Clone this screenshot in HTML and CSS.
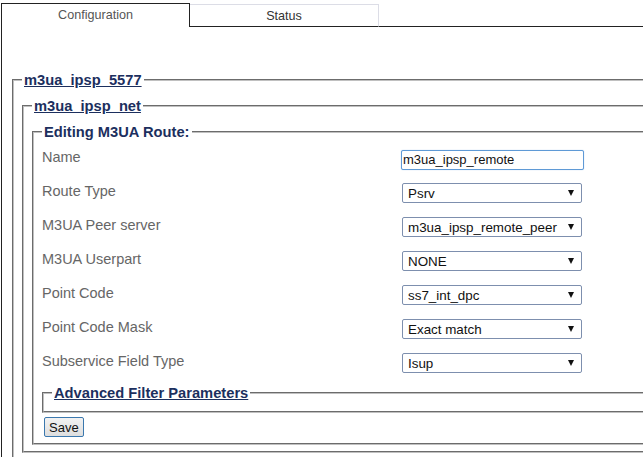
FILE: index.html
```html
<!DOCTYPE html>
<html>
<head>
<meta charset="utf-8">
<title>Editing M3UA Route</title>
<link rel="stylesheet" href="styles.css">
</head>
<body>
<div class="tabs">
  <div class="tab tab-active">Configuration</div>
  <div class="tab tab-inactive">Status</div>
  <div class="tab-fill"></div>
</div>
<div class="panel">
  <fieldset class="fs fs-outer">
    <legend><a href="#">m3ua_ipsp_5577</a></legend>
    <fieldset class="fs fs-mid">
      <legend><a href="#">m3ua_ipsp_net</a></legend>
      <fieldset class="fs fs-edit">
        <legend>Editing M3UA Route:</legend>
        <div class="rows">
          <div class="row">
            <label class="lbl">Name</label>
            <input class="txt" type="text" value="m3ua_ipsp_remote">
          </div>
          <div class="row">
            <label class="lbl">Route Type</label>
            <span class="sel"><select><option>Psrv</option></select></span>
          </div>
          <div class="row">
            <label class="lbl">M3UA Peer server</label>
            <span class="sel"><select><option>m3ua_ipsp_remote_peer</option></select></span>
          </div>
          <div class="row">
            <label class="lbl">M3UA Userpart</label>
            <span class="sel"><select><option>NONE</option></select></span>
          </div>
          <div class="row">
            <label class="lbl">Point Code</label>
            <span class="sel"><select><option>ss7_int_dpc</option></select></span>
          </div>
          <div class="row">
            <label class="lbl">Point Code Mask</label>
            <span class="sel"><select><option>Exact match</option></select></span>
          </div>
          <div class="row">
            <label class="lbl">Subservice Field Type</label>
            <span class="sel"><select><option>Isup</option></select></span>
          </div>
        </div>
        <fieldset class="fs fs-adv">
          <legend><a href="#">Advanced Filter Parameters</a></legend>
        </fieldset>
        <button class="btn" type="button">Save</button>
      </fieldset>
    </fieldset>
  </fieldset>
</div>
</body>
</html>
```

FILE: styles.css
```css
html, body {
  margin: 0;
  padding: 0;
  background: #ffffff;
}
body {
  width: 643px;
  height: 457px;
  overflow: hidden;
  font-family: "Liberation Sans", Arial, sans-serif;
}

.tabs {
  display: flex;
  padding-top: 3px;
  padding-left: 1px;
  height: 24px;
  width: 900px;
}
.tab {
  box-sizing: border-box;
  width: 189px;
  font-size: 12.6px;
  display: flex;
  align-items: center;
  justify-content: center;
}
.tab-active {
  height: 24px;
  border: 1px solid #222;
  border-bottom: 0;
  color: #555;
  padding-bottom: 1px;
}
.tab-inactive {
  margin-top: 1px;
  height: 23px;
  border-top: 1px solid #dcdde6;
  border-right: 1px solid #dcdde6;
  border-bottom: 1px solid #222;
  color: #333;
}
.tab-fill {
  flex: 1;
  height: 24px;
  box-sizing: border-box;
  border-bottom: 1px solid #222;
}

.panel {
  margin-left: 1px;
  border-left: 1px solid #222;
  width: 900px;
  min-height: 600px;
  padding-top: 45px;
  box-sizing: border-box;
}

.fs {
  margin: 0;
  border: 2px groove #c0c0c0;
  padding: 10px 0 6px 8px;
  min-width: 0;
}
.fs > legend {
  padding: 0 2px;
  font-size: 14.7px;
  line-height: 16px;
  font-weight: bold;
  color: #1c2f5e;
}
.fs > legend a {
  color: #1c2f5e;
  text-decoration: underline;
}
.fs-outer {
  margin-left: 10px;
}
.fs-edit {
  padding-top: 2px;
}

.rows {
  display: flex;
  flex-direction: column;
}
.row {
  display: flex;
  align-items: center;
  height: 34px;
}
.lbl {
  width: 359px;
  flex: none;
  font-size: 14.5px;
  color: #666;
  padding-bottom: 4px;
}
.txt {
  box-sizing: border-box;
  width: 183px;
  height: 20px;
  margin: 1px 0 0 0;
  padding: 0 1px;
  border: 1px solid #5f9ad6;
  border-radius: 2px;
  box-shadow: 0 0 1px #8fb8e6;
  font-family: "Liberation Sans", Arial, sans-serif;
  font-size: 13px;
  color: #111;
  outline: none;
}
.sel {
  position: relative;
  display: inline-block;
  margin-left: 1px;
}
.sel select {
  -webkit-appearance: none;
  appearance: none;
  box-sizing: border-box;
  width: 180px;
  height: 20px;
  margin: 0;
  padding: 0 0 0 5px;
  border: 1px solid #7d8fae;
  border-radius: 2px;
  background: #fff;
  font-family: "Liberation Sans", Arial, sans-serif;
  font-size: 13.4px;
  color: #111;
  display: block;
}
.sel::after {
  content: "";
  position: absolute;
  right: 8px;
  top: 7px;
  border-left: 3px solid transparent;
  border-right: 3px solid transparent;
  border-top: 6px solid #111;
  pointer-events: none;
}

.fs-adv {
  margin-top: 5px;
  padding: 5px 0 5px 8px;
}

.btn {
  display: block;
  margin: 4px 0 0 2px;
  box-sizing: border-box;
  height: 20px;
  padding: 0 4px;
  border: 1px solid #3b78ae;
  border-radius: 2px;
  background: linear-gradient(#f2f2f2, #dedede);
  font-family: "Liberation Sans", Arial, sans-serif;
  font-size: 13px;
  color: #111;
}
```
